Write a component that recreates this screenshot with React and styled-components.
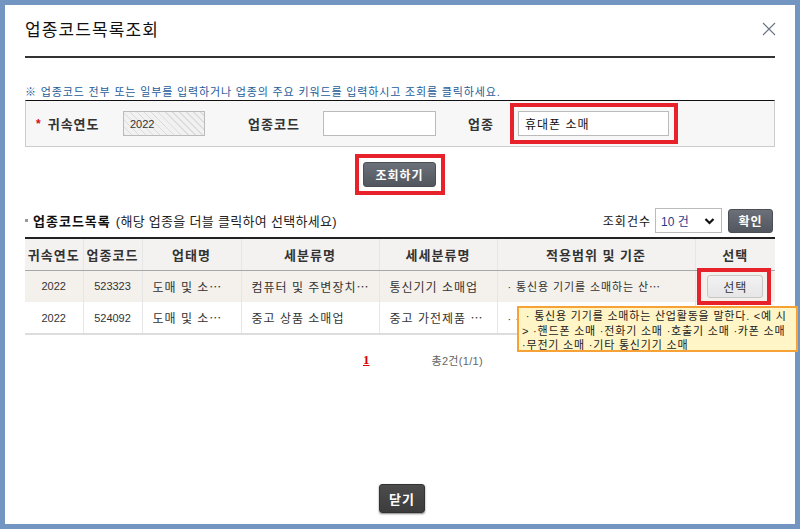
import React from "react";
import styled, { createGlobalStyle } from "styled-components";

const Global = createGlobalStyle`
  html, body { margin: 0; padding: 0; }
  body {
    background: #7295c1;
    font-family: "Liberation Sans", "Noto Sans CJK KR", sans-serif;
    color: #333;
  }
  * { box-sizing: border-box; }
`;

const Page = styled.div`
  width: 800px;
  height: 529px;
  padding: 5px;
  background: #7295c1;
`;

const Dialog = styled.div`
  position: relative;
  width: 790px;
  height: 519px;
  background: #fff;
  padding: 0 20px 11px;
  display: flex;
  flex-direction: column;
`;

const Header = styled.div`
  height: 53px;
  display: flex;
  align-items: center;
  justify-content: space-between;
  border-bottom: 2px solid #333;
  padding-bottom: 4px;
`;

const Title = styled.h1`
  margin: 0;
  font-size: 17px;
  font-weight: normal;
  color: #111;
  letter-spacing: 1.1px;
`;

const CloseBtn = styled.button`
  border: 0;
  background: none;
  padding: 0;
  width: 14px;
  height: 14px;
  margin-right: -1px;
  display: flex;
  cursor: pointer;
`;

const Info = styled.p`
  margin: 27px 0 0;
  font-size: 11px;
  line-height: 15px;
  color: #1d5c9a;
  letter-spacing: 0.85px;
  white-space: nowrap;
`;

const FormBox = styled.div`
  height: 47px;
  border: 1px solid #ccc;
  border-top: 1px solid #111;
  background: #f7f7f7;
  display: flex;
  align-items: center;
`;

const Label = styled.label`
  width: ${(p) => p.$w}px;
  padding-left: ${(p) => p.$pl}px;
  font-size: 13px;
  font-weight: bold;
  color: #333;
  letter-spacing: 1px;
  display: flex;
  align-items: center;
  gap: 6px;
`;

const Req = styled.span`
  color: #d0101a;
  font-size: 12px;
`;

const Input = styled.div`
  width: ${(p) => p.$w}px;
  height: 25px;
  border: 1px solid #bbb;
  background: ${(p) =>
    p.$hatch
      ? "repeating-linear-gradient(45deg, #dcdcdc 0 1px, #f1f1f1 1px 5px)"
      : "#fff"};
  font-size: ${(p) => (p.$hatch ? "11px" : "12px")};
  letter-spacing: ${(p) => (p.$hatch ? 0 : 1)}px;
  color: ${(p) => (p.$hatch ? "#333" : "#111")};
  padding-left: 6px;
  display: flex;
  align-items: center;
`;

const RedFrame = styled.div`
  border: 4px solid #e8222a;
  padding: ${(p) => p.$pad};
  display: flex;
  align-items: center;
  justify-content: center;
`;

const SearchRow = styled.div`
  margin-top: 7px;
  display: flex;
  justify-content: center;
`;

const DarkButton = styled.button`
  height: ${(p) => p.$h}px;
  width: ${(p) => p.$w}px;
  border: 1px solid #4a4e55;
  border-radius: 3px;
  background: linear-gradient(#6b7079, #52565e);
  color: #fff;
  font-family: inherit;
  font-size: 12px;
  font-weight: bold;
  padding: 0;
  letter-spacing: 1px;
  cursor: pointer;
`;

const ListHead = styled.div`
  margin-top: 13px;
  height: 25px;
  display: flex;
  align-items: center;
`;

const Bullet = styled.span`
  width: 3px;
  height: 3px;
  background: #999;
  margin-right: 5px;
`;

const ListTitle = styled.span`
  font-size: 13px;
  font-weight: bold;
  color: #111;
  letter-spacing: 1px;
`;

const ListHint = styled.span`
  font-size: 13px;
  color: #222;
  margin-left: 5px;
  letter-spacing: 0.3px;
`;

const Spacer = styled.div`
  flex: 1;
`;

const CountLabel = styled.span`
  font-size: 12px;
  color: #111;
  margin-right: 4px;
  letter-spacing: 1px;
`;

const Select = styled.div`
  width: 67px;
  height: 25px;
  border: 1px solid #bbb;
  background: #fff;
  display: flex;
  align-items: center;
  justify-content: space-between;
  padding: 0 6px 0 5px;
  font-size: 12px;
  color: #1a3c8c;
  margin-right: 6px;
`;

const Table = styled.table`
  margin-top: 4px;
  width: 750px;
  border-collapse: collapse;
  table-layout: fixed;
  border-top: 2px solid #222;
  border-bottom: 2px solid #ddd;
`;

const Th = styled.th`
  height: 32px;
  background: #f3f2f0;
  font-size: 13px;
  font-weight: bold;
  color: #333;
  border-left: 1px solid #e6e6e6;
  border-bottom: 1px solid #a8a8a8;
  padding: 0;
  white-space: nowrap;
  letter-spacing: 1px;
  &:first-child { border-left: 0; }
`;

const Tr = styled.tr`
  background: ${(p) => (p.$hl ? "#f4f0eb" : "#fff")};
`;

const Td = styled.td`
  position: relative;
  height: 32px;
  font-size: ${(p) => (p.$center || p.$small ? 11 : 12)}px;
  letter-spacing: ${(p) => (p.$center ? 0 : p.$small ? 0.9 : 1)}px;
  color: #333;
  border-left: 1px solid #e6e6e6;
  border-top: 1px solid #fff;
  padding: 0 ${(p) => (p.$center ? 0 : 10)}px;
  text-align: ${(p) => (p.$center ? "center" : "left")};
  white-space: nowrap;
  overflow: visible;
  &:first-child { border-left: 0; }
`;

const PickButton = styled.button`
  width: 56px;
  height: 23px;
  border: 1px solid #c8c8c8;
  border-radius: 3px;
  background: linear-gradient(#f2f2f2, #e6e6e6);
  font-family: inherit;
  font-size: 12px;
  letter-spacing: 1px;
  color: #333;
  padding: 0;
  cursor: pointer;
`;

const CellFrame = styled.div`
  position: absolute;
  left: 50%;
  top: 50%;
  width: 74px;
  height: 37px;
  margin-left: -38px;
  margin-top: -18px;
  border: 4px solid #e8222a;
  pointer-events: none;
`;

const Tooltip = styled.div`
  position: absolute;
  left: 512px;
  top: 301px;
  width: 281px;
  height: 46px;
  background: #fff5c6;
  border: 2px solid #f6a236;
  padding: 1px 3px;
  font-size: 11px;
  line-height: 14.5px;
  color: #222;
  white-space: nowrap;
  letter-spacing: 0.8px;
`;

const Pager = styled.div`
  margin-top: 17px;
  display: flex;
  align-items: center;
  padding-left: 338px;
`;

const PageNum = styled.a`
  font-family: "Liberation Serif", serif;
  font-size: 13px;
  font-weight: bold;
  color: #d00;
  text-decoration: underline;
`;

const Total = styled.span`
  margin-left: 62px;
  font-size: 11px;
  color: #666;
  letter-spacing: 0.3px;
`;

const Footer = styled.div`
  margin-top: auto;
  display: flex;
  justify-content: center;
`;

const CloseButton = styled.button`
  width: 46px;
  height: 29px;
  border: 1px solid #333;
  border-radius: 3px;
  background: linear-gradient(#4c4c4c, #3c3c3c);
  box-shadow: 0 1px 2px rgba(0, 0, 0, 0.5);
  color: #fff;
  font-family: inherit;
  font-size: 13px;
  font-weight: bold;
  letter-spacing: 1px;
  padding: 0;
  margin-left: 4px;
  cursor: pointer;
`;

const cols = [58, 59, 99, 138, 118, 198, 80];

const rows = [
  {
    year: "2022",
    code: "523323",
    biz: "도매 및 소⋯",
    cat: "컴퓨터 및 주변장치⋯",
    sub: "통신기기 소매업",
    scope: "· 통신용 기기를 소매하는 산⋯",
    hl: true,
  },
  {
    year: "2022",
    code: "524092",
    biz: "도매 및 소⋯",
    cat: "중고 상품 소매업",
    sub: "중고 가전제품 ⋯",
    scope: "· 통신용 기기를 소매하는 산⋯",
    hl: false,
  },
];

export default function App() {
  return (
    <>
      <Global />
      <Page>
        <Dialog>
          <Header>
            <Title>업종코드목록조회</Title>
            <CloseBtn aria-label="닫기">
              <svg width="14" height="14" viewBox="0 0 14 14">
                <path d="M1 1 L13 13 M13 1 L1 13" stroke="#6a7585" strokeWidth="1.1" fill="none" />
              </svg>
            </CloseBtn>
          </Header>

          <Info>※ 업종코드 전부 또는 일부를 입력하거나 업종의 주요 키워드를 입력하시고 조회를 클릭하세요.</Info>

          <FormBox>
            <Label $w={97} $pl={10}>
              <Req>*</Req>귀속연도
            </Label>
            <Input $w={82} $hatch>2022</Input>
            <Label $w={118} $pl={43}>업종코드</Label>
            <Input $w={113} />
            <Label $w={74} $pl={32}>업종</Label>
            <RedFrame $pad="4px 5px 4px 4px">
              <Input $w={151}>휴대폰 소매</Input>
            </RedFrame>
          </FormBox>

          <SearchRow>
            <RedFrame $pad="4px 5px 4px 4px">
              <DarkButton $w={73} $h={25}>조회하기</DarkButton>
            </RedFrame>
          </SearchRow>

          <ListHead>
            <Bullet />
            <ListTitle>업종코드목록</ListTitle>
            <ListHint>(해당 업종을 더블 클릭하여 선택하세요)</ListHint>
            <Spacer />
            <CountLabel>조회건수</CountLabel>
            <Select>
              <span>10 건</span>
              <svg width="11" height="8" viewBox="0 0 11 8">
                <path d="M1.5 2 L5.5 6 L9.5 2" stroke="#111" strokeWidth="2.2" fill="none" />
              </svg>
            </Select>
            <DarkButton $w={45} $h={24}>확인</DarkButton>
            <span style={{ width: 2 }} />
          </ListHead>

          <Table>
            <colgroup>
              {cols.map((w, i) => (
                <col key={i} style={{ width: w }} />
              ))}
            </colgroup>
            <thead>
              <tr>
                <Th>귀속연도</Th>
                <Th>업종코드</Th>
                <Th>업태명</Th>
                <Th>세분류명</Th>
                <Th>세세분류명</Th>
                <Th>적용범위 및 기준</Th>
                <Th>선택</Th>
              </tr>
            </thead>
            <tbody>
              {rows.map((r, i) => (
                <Tr key={r.code} $hl={r.hl}>
                  <Td $center>{r.year}</Td>
                  <Td $center>{r.code}</Td>
                  <Td>{r.biz}</Td>
                  <Td>{r.cat}</Td>
                  <Td>{r.sub}</Td>
                  <Td $small>{r.scope}</Td>
                  <Td $center>
                    {i === 0 && (
                      <>
                        <PickButton>선택</PickButton>
                        <CellFrame />
                      </>
                    )}
                  </Td>
                </Tr>
              ))}
            </tbody>
          </Table>

          <Pager>
            <PageNum>1</PageNum>
            <Total>총2건(1/1)</Total>
          </Pager>

          <Footer>
            <CloseButton>닫기</CloseButton>
          </Footer>

          <Tooltip>
            &nbsp;· 통신용 기기를 소매하는 산업활동을 말한다. &lt;예 시
            <br />
            &gt; ·핸드폰 소매 ·전화기 소매 ·호출기 소매 ·카폰 소매
            <br />
            ·무전기 소매 ·기타 통신기기 소매
          </Tooltip>
        </Dialog>
      </Page>
    </>
  );
}
